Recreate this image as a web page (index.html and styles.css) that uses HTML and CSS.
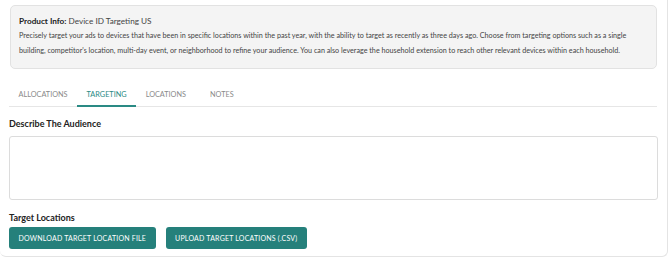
FILE: index.html
```html
<!DOCTYPE html>
<html lang="en">
<head>
    <meta charset="UTF-8">
    <title>Device ID Targeting</title>
    <link rel="stylesheet" href="styles.css">
</head>
<body>
    <div class="card">
        <div class="info">
            <div class="info-title"><b>Product Info:</b> Device ID Targeting US</div>
            <p class="info-text">Precisely target your ads to devices that have been in specific locations within the past year, with the ability to target as recently as three days ago. Choose from targeting options such as a single building, competitor's location, multi-day event, or neighborhood to refine your audience. You can also leverage the household extension to reach other relevant devices within each household.</p>
        </div>
        <div class="tabs">
            <div class="tab">ALLOCATIONS</div>
            <div class="tab active">TARGETING</div>
            <div class="tab">LOCATIONS</div>
            <div class="tab last">NOTES</div>
        </div>
        <h3 class="label">Describe The Audience</h3>
        <textarea class="audience"></textarea>
        <h3 class="label small">Target Locations</h3>
        <div class="actions">
            <button class="btn">DOWNLOAD TARGET LOCATION FILE</button>
            <button class="btn">UPLOAD TARGET LOCATIONS (.CSV)</button>
        </div>
    </div>
</body>
</html>
```

FILE: styles.css
```css
body {
    margin: 0;
    font-family: 'Lato', sans-serif;
    color: #333;
    background: #fff;
}
.card {
    width: 668px;
    height: 257px;
    box-sizing: border-box;
    border: 1px solid #e4e4e4;
    border-top: none;
    border-left: none;
    border-radius: 0 0 6px 6px;
    padding: 5px 10px 0 9px;
}
.info {
    margin-left: 1px;
    background: #f4f4f4;
    border: 1px solid #e2e2e2;
    border-radius: 5px;
    padding: 9px 9px 10px 8px;
    height: 64px;
    box-sizing: border-box;
}
.info-title {
    font-size: 8.2px;
    line-height: 12px;
    color: #444;
}
.info-title b {
    color: #222;
}
.info-text {
    margin: 1px 0 0;
    font-size: 7.2px;
    line-height: 15px;
    color: #444;
}
.tabs {
    display: flex;
    margin-top: 16px;
    border-bottom: 1px solid #e6e6e6;
}
.tab {
    font-size: 7.3px;
    color: #8a8a8a;
    padding: 5px 9.5px 6px;
    border-bottom: 2px solid transparent;
    margin-bottom: -1px;
}
.tab.last {
    margin-left: 5px;
}
.tab.active {
    color: #2a8a84;
    border-bottom-color: #2a8a84;
}
.label {
    margin: 11px 0 7px;
    font-size: 9px;
    font-weight: bold;
    color: #222;
}
.label.small {
    margin: 12px 0 4px;
}
.audience {
    display: block;
    width: 649px;
    height: 64px;
    box-sizing: border-box;
    border: 1px solid #dcdcdc;
    border-radius: 3px;
    resize: none;
}
.actions {
    display: flex;
    gap: 10px;
}
.btn {
    background: #25807b;
    color: #fff;
    border: none;
    border-radius: 3px;
    font-family: 'Lato', sans-serif;
    font-size: 7px;
    letter-spacing: 0.2px;
    height: 22px;
    padding: 0 9.5px;
}
```
